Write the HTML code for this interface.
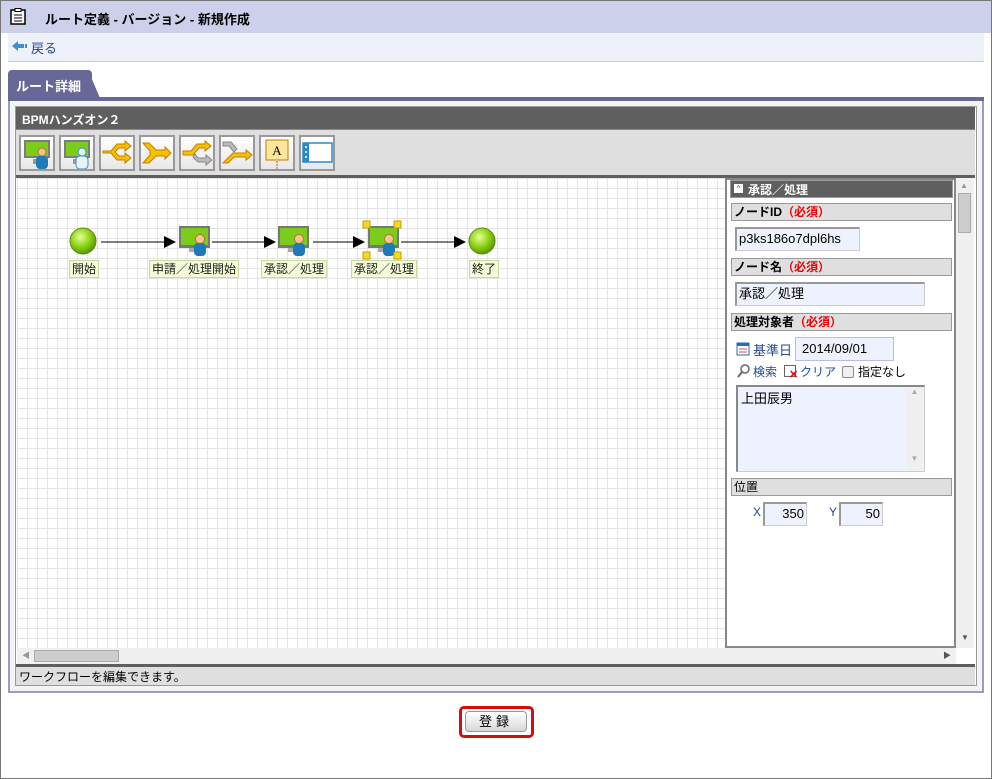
<!DOCTYPE html>
<html><head><meta charset="utf-8"><style>
*{margin:0;padding:0;box-sizing:border-box}
body{width:992px;height:779px;position:relative;background:#fff;font-family:"Liberation Sans","Noto Sans CJK JP",sans-serif;font-size:12px;color:#000;overflow:hidden}
.a{position:absolute}
.grid{background-color:#fff;background-image:linear-gradient(#e4e4e4 1px,transparent 1px),linear-gradient(90deg,#e4e4e4 1px,transparent 1px);background-size:10px 10px}
.tb{position:absolute;top:135px;width:36px;height:36px;border:2px solid #999;background:linear-gradient(#fff,#e8e8e8)}
.lbl{position:absolute;top:260px;height:18px;background:#f4fbd8;border:1px solid #c6d9a0;font-size:12px;line-height:16px;padding:0 2px;color:#222}
.sec{position:absolute;left:731px;width:221px;height:18px;background:#e0dfdf;border:1px solid #999;font-weight:bold;font-size:12px;line-height:16px;padding-left:2px}
.sec i{font-style:normal;color:#e00}
.inp{position:absolute;background:#eef2fe;border:1px solid #ccc;border-top:2px solid #999;border-left:2px solid #999;font-size:13px;line-height:19px;padding-left:2px}
</style></head><body>
<div class="a" style="left:0;top:0;width:992px;height:779px;border:1px solid #777"></div>
<div class="a" style="left:1px;top:1px;width:990px;height:32px;background:#cdd0ea"></div>
<svg class="a" style="left:10px;top:8px" width="17" height="17"><rect x="1" y="2" width="14" height="14" fill="#fff" stroke="#000" stroke-width="1.5"/><rect x="5" y="0.5" width="6" height="3" fill="#fff" stroke="#000"/><path d="M4 7h8M4 10h8M4 13h8" stroke="#000"/></svg>
<div class="a" style="left:45px;top:9px;font-weight:bold;font-size:13px">ルート定義 - バージョン - 新規作成</div>
<div class="a" style="left:8px;top:33px;width:976px;height:29px;background:#eef0fa;border-bottom:1px solid #c8cade"></div>
<svg class="a" style="left:11px;top:40px" width="17" height="12"><path d="M1 6L7 1v3h6v4H7v3z" fill="#3b8fd6"/><rect x="14" y="4" width="2" height="4" fill="#3b8fd6"/></svg>
<div class="a" style="left:31px;top:38px;color:#234a8a;font-size:13px">戻る</div>
<div class="a" style="left:8px;top:70px;width:84px;height:28px;background:#676898;border-radius:4px 4px 0 0"></div>
<div class="a" style="left:80px;top:70px;width:20px;height:28px;background:#676898;clip-path:polygon(0 0,40% 0,100% 100%,0 100%)"></div>
<div class="a" style="left:16px;top:76px;color:#fff;font-weight:bold;font-size:13px">ルート詳細</div>
<div class="a" style="left:8px;top:97px;width:976px;height:4px;background:#676898"></div>
<div class="a" style="left:8px;top:101px;width:976px;height:592px;border:2px solid #9a9cc8;border-top:0;background:#f4f4f8"></div>
<div class="a" style="left:15px;top:106px;width:962px;height:580px;border:1px solid #999;background:#fff"></div>
<div class="a" style="left:16px;top:107px;width:959px;height:23px;background:#5f5f5f;border-bottom:1px solid #888"></div>
<div class="a" style="left:22px;top:111px;color:#fff;font-weight:bold;font-size:12px">BPMハンズオン２</div>
<div class="a" style="left:16px;top:130px;width:959px;height:45px;background:#e0dfdf"></div>
<div class="a" style="left:16px;top:175px;width:959px;height:3px;background:#5f5f5f"></div>
<div class="tb" style="left:19px"><svg width="32" height="32"><rect x="3" y="3" width="26" height="18" fill="#7c7c7c"/><rect x="5" y="5" width="22" height="14" fill="#7ccc1c"/><rect x="12" y="22" width="8" height="5" fill="#999"/><circle cx="21" cy="15" r="4" fill="#f5c48a" stroke="#c0702a"/><rect x="15" y="19" width="12" height="13" rx="4" fill="#1e7ab8"/></svg></div>
<div class="tb" style="left:59px"><svg width="32" height="32"><rect x="3" y="3" width="26" height="18" fill="#7c7c7c"/><rect x="5" y="5" width="22" height="14" fill="#7ccc1c"/><rect x="12" y="22" width="8" height="5" fill="#999"/><circle cx="21" cy="15" r="4" fill="#e8f4f8" stroke="#3a8fc0"/><rect x="15" y="19" width="12" height="13" rx="4" fill="#e8f4f8" stroke="#3a8fc0"/></svg></div>
<div class="tb" style="left:99px"><svg width="32" height="32"><path d="M2 14h8l6-7h8v-3l6 5-6 5v-3h-6l-4 4 4 4h6v-3l6 5-6 5v-3h-8l-6-7H2z" fill="#f8c000" stroke="#c08000"/></svg></div>
<div class="tb" style="left:139px"><svg width="32" height="32"><path d="M2 6h6l7 7h9v-3l6 6-6 6v-3h-9l-7 7H2l7-8v-4z" fill="#f8c000" stroke="#c08000"/></svg></div>
<div class="tb" style="left:179px"><svg width="32" height="32"><path d="M14 17l3 4h8v-3l6 5-6 5v-3h-8l-5-5z" fill="#bbb" stroke="#888"/><path d="M2 14h8l6-7h8v-3l6 5-6 5v-3h-6l-6 7H2z" fill="#f8c000" stroke="#c08000"/></svg></div>
<div class="tb" style="left:219px"><svg width="32" height="32"><path d="M2 5h8l6 7-3 3-5-6H2z" fill="#bbb" stroke="#888"/><path d="M2 26l10-10h13v-3l6 5-6 5v-3H13l-6 6z" fill="#f8c000" stroke="#c08000"/></svg></div>
<div class="tb" style="left:259px"><svg width="32" height="32"><rect x="5" y="3" width="22" height="20" fill="#fde59a" stroke="#c08000"/><text x="16" y="18" font-family="Liberation Serif" font-size="13" text-anchor="middle">A</text><path d="M16 24v8" stroke="#c06000" stroke-dasharray="2 1"/></svg></div>
<div class="tb" style="left:299px"><svg width="32" height="32"><rect x="2" y="6" width="29" height="19" fill="#fff" stroke="#2a8ac8" stroke-width="1.5"/><rect x="2" y="6" width="6" height="19" fill="#2a8ac8"/><circle cx="5" cy="10" r="1" fill="#fff"/><circle cx="5" cy="15" r="1" fill="#fff"/><circle cx="5" cy="20" r="1" fill="#fff"/></svg></div>
<div class="a grid" style="left:17px;top:178px;width:709px;height:470px"></div>
<svg class="a" style="left:17px;top:178px" width="709" height="120">
<defs><radialGradient id="g" cx="40%" cy="35%" r="65%"><stop offset="0" stop-color="#e6ff9a"/><stop offset=".6" stop-color="#8ad010"/><stop offset="1" stop-color="#5a9a00"/></radialGradient>
<g id="n"><rect x="0" y="0" width="31" height="22" fill="#777"/><rect x="2" y="2" width="27" height="17" fill="#7ccc1c"/><rect x="10" y="22" width="11" height="4" fill="#aaa"/><circle cx="21" cy="13" r="4.5" fill="#f8c890" stroke="#c0702a"/><rect x="15" y="17" width="12" height="13" rx="4" fill="#1e7ab8"/></g></defs>
<circle cx="66" cy="63" r="13" fill="url(#g)" stroke="#5a8a10"/>
<circle cx="465" cy="63" r="13" fill="url(#g)" stroke="#5a8a10"/>
<path d="M84 64h74M195 64h63M296 64h50M384 64h64" stroke="#000"/>
<path d="M147 58l12 6-12 6zM247 58l12 6-12 6zM336 58l12 6-12 6zM437 58l12 6-12 6z" fill="#000"/>
<use href="#n" x="162" y="48"/><use href="#n" x="261" y="48"/><use href="#n" x="351" y="48"/>
<g fill="#f8d820" stroke="#c0a000"><rect x="346" y="43" width="7" height="7"/><rect x="377" y="43" width="7" height="7"/><rect x="346" y="74" width="7" height="7"/><rect x="377" y="74" width="7" height="7"/></g>
</svg>
<div class="lbl" style="left:69px">開始</div>
<div class="lbl" style="left:149px">申請／処理開始</div>
<div class="lbl" style="left:261px">承認／処理</div>
<div class="lbl" style="left:351px">承認／処理</div>
<div class="lbl" style="left:469px">終了</div>
<div class="a" style="left:725px;top:178px;width:231px;height:470px;border:2px solid #888;background:#fff"></div>
<div class="a" style="left:730px;top:180px;width:223px;height:18px;background:#5f5f5f;border:1px solid #999"></div>
<div class="a" style="left:733px;top:183px;width:11px;height:11px;background:#fff;border:1px solid #2a6ab8;color:#2a6ab8;font-size:8px;line-height:9px;text-align:center">^</div>
<div class="a" style="left:748px;top:181px;color:#fff;font-weight:bold">承認／処理</div>
<div class="sec" style="top:203px">ノードID<i>（必須）</i></div>
<div class="inp" style="left:735px;top:227px;width:125px;height:24px">p3ks186o7dpl6hs</div>
<div class="sec" style="top:258px">ノード名<i>（必須）</i></div>
<div class="inp" style="left:735px;top:282px;width:190px;height:24px">承認／処理</div>
<div class="sec" style="top:313px">処理対象者<i>（必須）</i></div>
<svg class="a" style="left:736px;top:340px" width="14" height="16"><rect x="1" y="3" width="12" height="12" fill="#fff" stroke="#2a6ab8"/><rect x="1" y="3" width="12" height="3" fill="#2a6ab8"/><path d="M3 9h8M3 12h8" stroke="#d05050"/></svg>
<div class="a" style="left:753px;top:340px;color:#234a8a;font-size:13px">基準日</div>
<div class="a" style="left:795px;top:337px;width:99px;height:24px;background:#eef2fe;border:1px solid #b8bce0;line-height:22px;padding-left:6px;font-size:13px">2014/09/01</div>
<svg class="a" style="left:737px;top:364px" width="14" height="14"><circle cx="8" cy="5" r="4" fill="#fff" stroke="#666" stroke-width="1.5"/><path d="M5 8l-4 5" stroke="#666" stroke-width="2"/></svg>
<div class="a" style="left:753px;top:363px;color:#234a8a">検索</div>
<div class="a" style="left:784px;top:365px;width:12px;height:12px;border:1px solid #666;background:#fff"></div>
<div class="a" style="left:789px;top:368px;color:#e00;font-size:11px;font-weight:bold">✕</div>
<div class="a" style="left:800px;top:363px;color:#234a8a">クリア</div>
<div class="a" style="left:842px;top:366px;width:12px;height:12px;border:1px solid #888;border-radius:2px;background:#f0f0f0"></div>
<div class="a" style="left:858px;top:363px">指定なし</div>
<div class="a" style="left:736px;top:385px;width:189px;height:87px;background:#eef2fe;border:2px solid #888;border-right:1px solid #ccc;border-bottom:1px solid #ccc;padding:1px 3px;font-size:13px">上田辰男</div>
<div class="a" style="left:906px;top:387px;width:17px;height:84px;background:#f0f0f0;color:#aaa;font-size:8px;text-align:center">▲<div style="margin-top:58px">▼</div></div>
<div class="sec" style="top:478px;font-weight:normal">位置</div>
<div class="a" style="left:753px;top:505px;color:#234a8a">X</div>
<div class="inp" style="left:763px;top:502px;width:44px;height:24px;text-align:right;padding-right:2px;line-height:20px">350</div>
<div class="a" style="left:829px;top:505px;color:#234a8a">Y</div>
<div class="inp" style="left:839px;top:502px;width:44px;height:24px;text-align:right;padding-right:2px;line-height:20px">50</div>
<div class="a" style="left:956px;top:178px;width:18px;height:470px;background:#f0f0f0"></div>
<div class="a" style="left:960px;top:181px;color:#999;font-size:8px">▲</div>
<div class="a" style="left:958px;top:193px;width:13px;height:40px;background:#cdcdcd;border:1px solid #aaa"></div>
<div class="a" style="left:961px;top:633px;color:#555;font-size:8px">▼</div>
<div class="a" style="left:17px;top:648px;width:939px;height:16px;background:#f0f0f0"></div>
<div class="a" style="left:22px;top:650px;color:#999;font-size:8px">◀</div>
<div class="a" style="left:34px;top:650px;width:85px;height:12px;background:#cdcdcd;border:1px solid #aaa"></div>
<div class="a" style="left:943px;top:650px;color:#555;font-size:8px">▶</div>
<div class="a" style="left:16px;top:664px;width:959px;height:3px;background:#5f5f5f"></div>
<div class="a" style="left:16px;top:667px;width:959px;height:18px;background:#e0dfdf"></div>
<div class="a" style="left:19px;top:668px;font-size:12px">ワークフローを編集できます。</div>
<div class="a" style="left:459px;top:706px;width:75px;height:32px;border:3px solid #d01010;border-radius:5px"></div>
<div class="a" style="left:465px;top:711px;width:62px;height:21px;border:1px solid #999;border-radius:4px;background:linear-gradient(#fff,#d8d8d8);text-align:center;font-size:13px;line-height:19px;letter-spacing:4px">登録</div>
</body></html>
